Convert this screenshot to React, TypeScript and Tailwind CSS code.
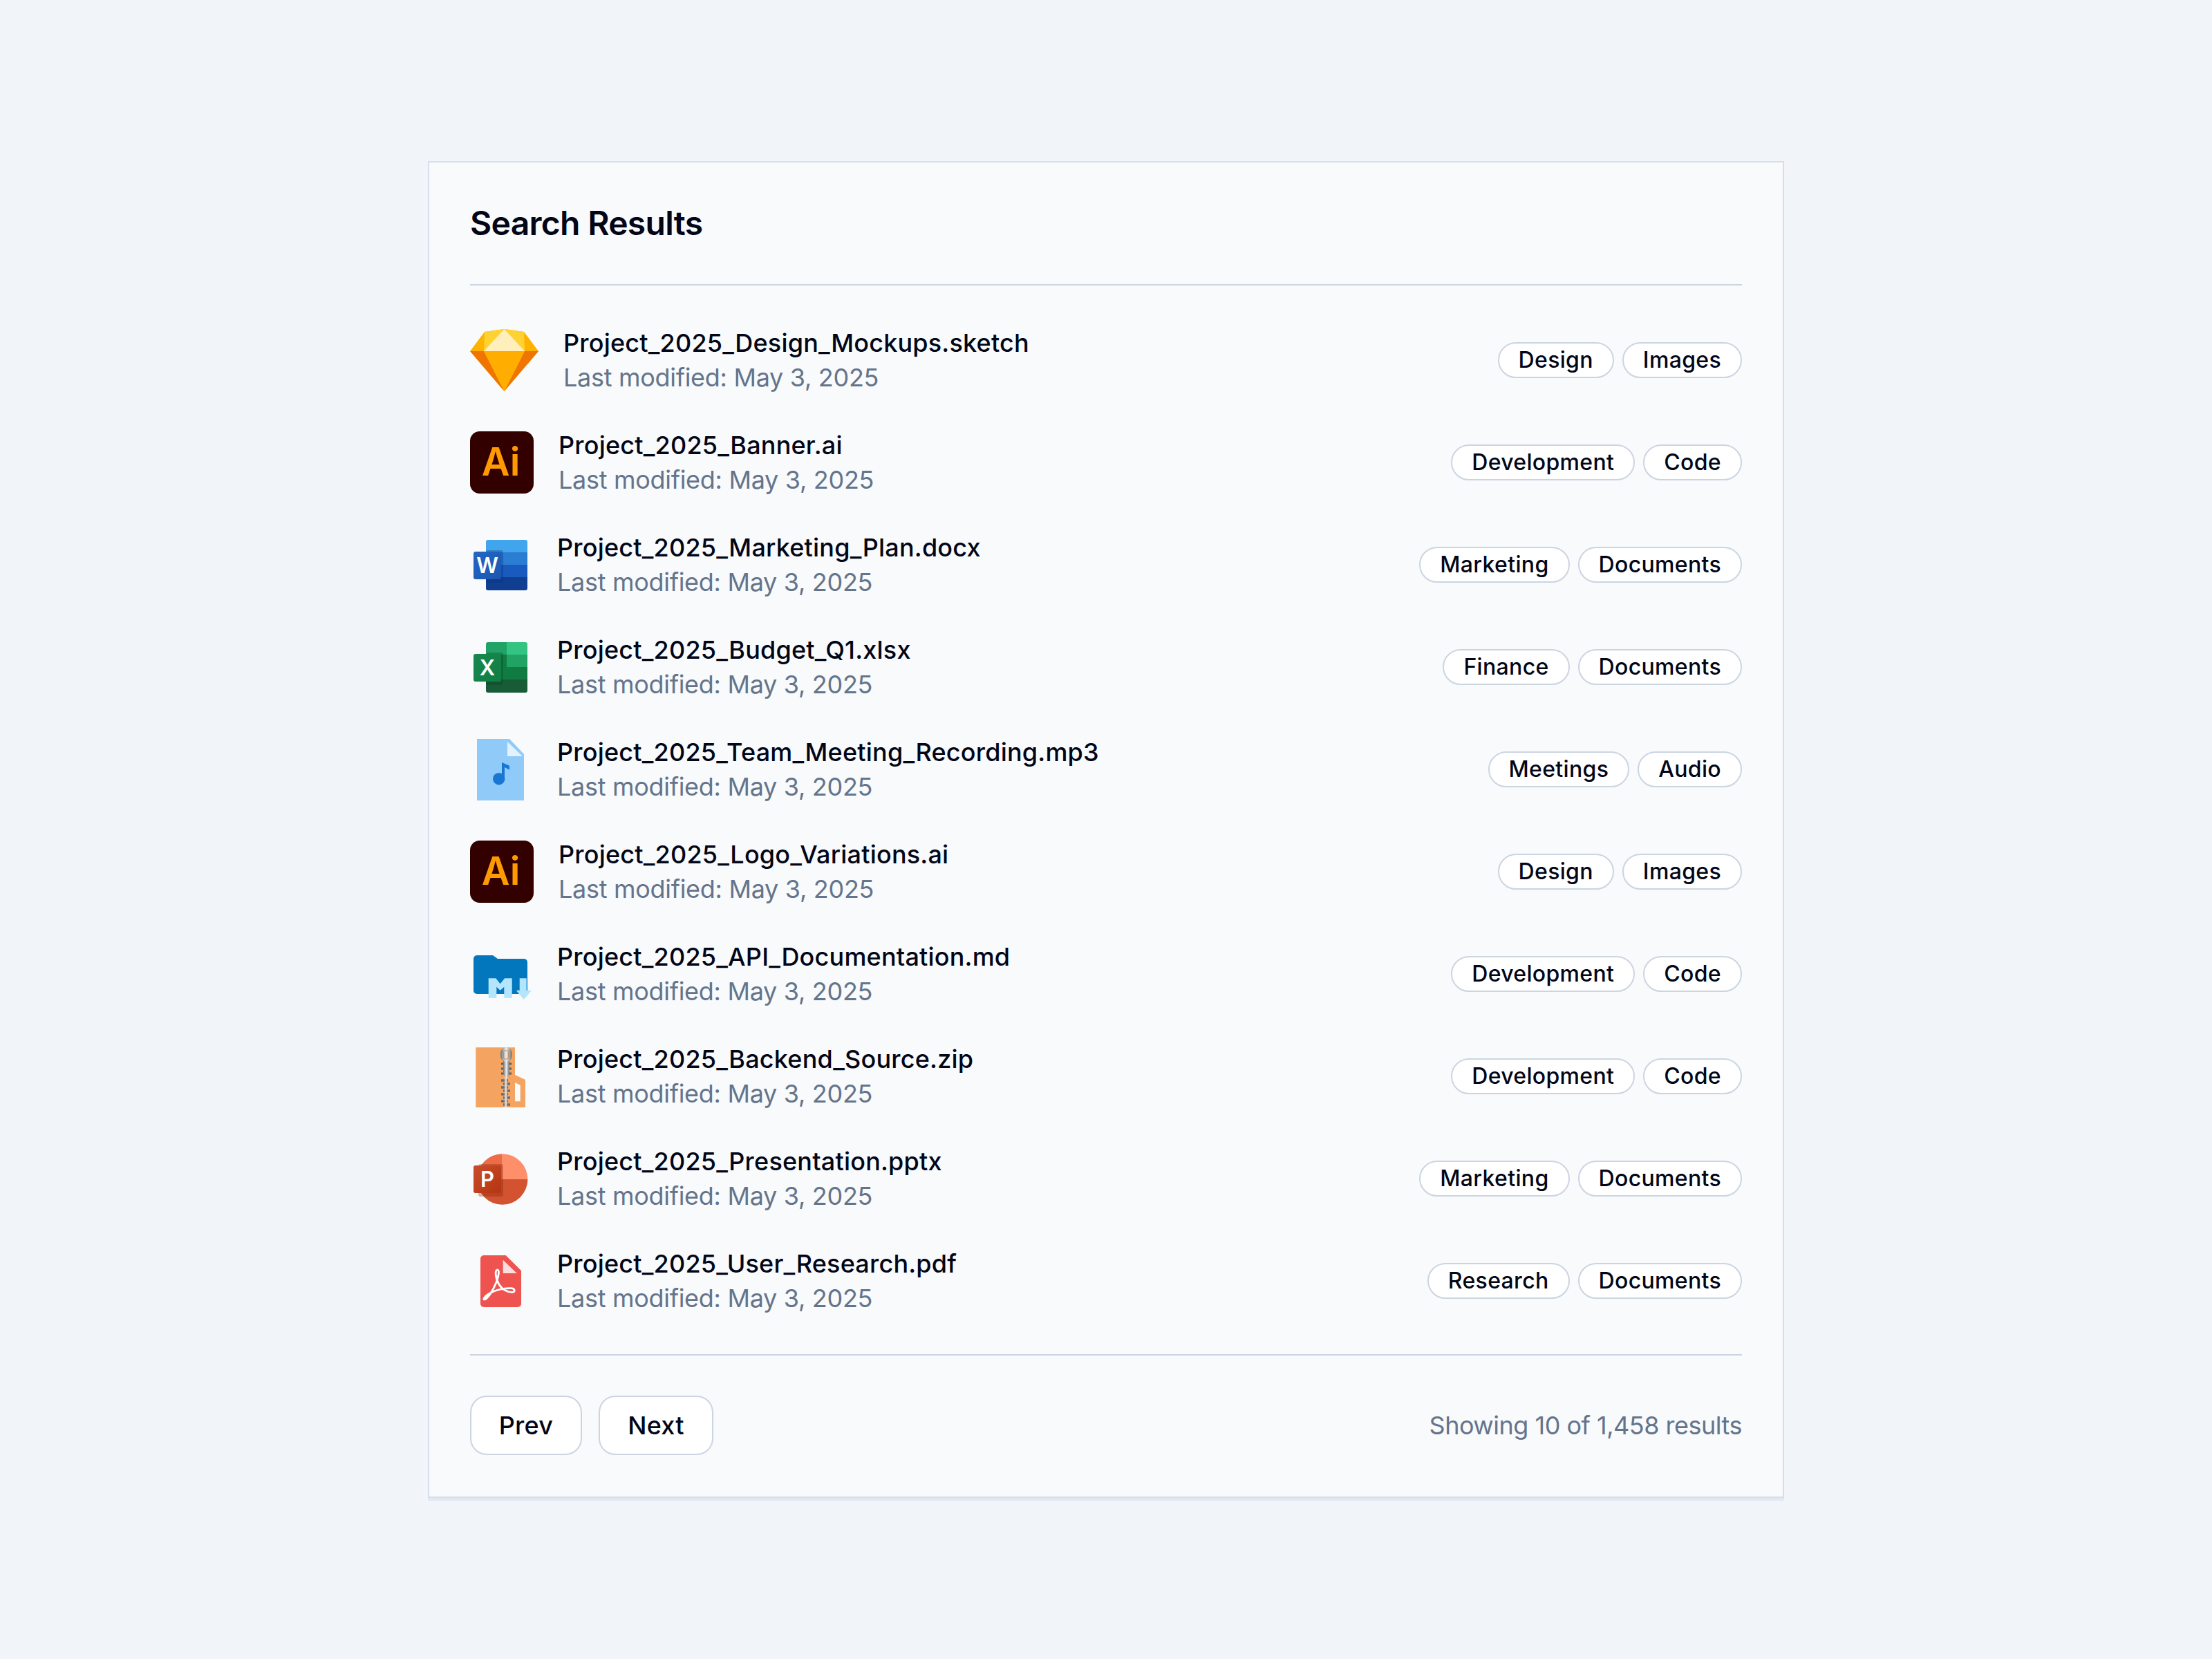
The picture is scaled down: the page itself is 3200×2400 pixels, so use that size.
type Tag = string;

interface FileRow {
  name: string;
  tags: [Tag, Tag];
  icon: React.ReactNode;
}

function SketchIcon() {
  return (
    <svg width="99" height="90" viewBox="0 0 99 90" className="shrink-0">
      <path d="M0 32 21 4 49.500 0 78 4 99 32 49.500 90Z" fill="#ffb300" />
      <path d="M21 4 49.500 0 78 4 79 32H20Z" fill="#ffd233" />
      <path d="M49.500 0 79 32H20Z" fill="#ffefbc" />
      <path d="M0 32H20L49.500 90Z" fill="#ef7400" />
      <path d="M99 32H79L49.500 90Z" fill="#ef7400" />
      <path d="M20 32H79L49.500 90Z" fill="#ffae00" />
    </svg>
  );
}

function AiIcon() {
  return (
    <div className="flex h-[90px] w-[92px] shrink-0 items-center justify-center rounded-[14px] bg-[#330000] pr-[3px] pb-[2px] text-[56px] leading-none font-semibold text-[#ff9a00]">
      Ai
    </div>
  );
}

function WordIcon() {
  return (
    <svg width="90" height="90" viewBox="0 0 90 90" className="shrink-0">
      <defs>
        <linearGradient id="wordSquare" x1="0" y1="0" x2="1" y2="1">
          <stop offset="0" stopColor="#2368c4" />
          <stop offset="1" stopColor="#1a56b0" />
        </linearGradient>
      </defs>
      <path d="M23 12a3 3 0 0 1 3-3h54a3 3 0 0 1 3 3v15H23Z" fill="#41a5ee" />
      <rect x="23" y="27" width="60" height="18" fill="#2b7cd3" />
      <rect x="23" y="45" width="60" height="18" fill="#185abd" />
      <path d="M23 63h60v16a3 3 0 0 1-3 3H26a3 3 0 0 1-3-3Z" fill="#103f91" />
      <rect x="23" y="24" width="25" height="47" rx="3" fill="#0b2f70" opacity="0.3" />
      <rect x="5" y="26" width="40" height="40" rx="3" fill="url(#wordSquare)" />
      <text x="25" y="57" textAnchor="middle" fontSize="31" fontWeight="600" fill="#fff" fontFamily="Inter, sans-serif">W</text>
    </svg>
  );
}

function ExcelIcon() {
  return (
    <svg width="90" height="90" viewBox="0 0 90 90" className="shrink-0">
      <defs>
        <linearGradient id="excelSquare" x1="0" y1="0" x2="1" y2="1">
          <stop offset="0" stopColor="#18884f" />
          <stop offset="1" stopColor="#117e43" />
        </linearGradient>
      </defs>
      <path d="M23 12a3 3 0 0 1 3-3h27v18H23Z" fill="#21a366" />
      <path d="M53 9h27a3 3 0 0 1 3 3v15H53Z" fill="#33c481" />
      <rect x="23" y="27" width="30" height="18" fill="#107c41" />
      <rect x="53" y="27" width="30" height="18" fill="#21a366" />
      <rect x="23" y="45" width="60" height="18" fill="#107c41" />
      <path d="M23 63h60v16a3 3 0 0 1-3 3H26a3 3 0 0 1-3-3Z" fill="#185c37" />
      <rect x="23" y="24" width="25" height="47" rx="3" fill="#0b3d20" opacity="0.3" />
      <rect x="5" y="26" width="40" height="40" rx="3" fill="url(#excelSquare)" />
      <text x="25" y="57" textAnchor="middle" fontSize="31" fontWeight="600" fill="#fff" fontFamily="Inter, sans-serif">X</text>
    </svg>
  );
}

function AudioIcon() {
  return (
    <svg width="90" height="90" viewBox="0 0 90 90" className="shrink-0">
      <path d="M10 1H57L78 23V90H10Z" fill="#90caf9" />
      <path d="M54 5 76 26H54Z" fill="#e3f2fd" />
      <circle cx="41.700" cy="58.700" r="8.700" fill="#1976d2" />
      <path d="M46 35 57 39.700V45.700L50 42V59H46Z" fill="#1976d2" />
    </svg>
  );
}

function MarkdownIcon() {
  return (
    <svg width="90" height="90" viewBox="0 0 90 90" className="shrink-0">
      <path d="M10 18H33L40 23H78a5 5 0 0 1 5 5V69a5 5 0 0 1-5 5H10a5 5 0 0 1-5-5V23a5 5 0 0 1 5-5Z" fill="#0277bd" />
      <path d="M26.700 51.300H37.300L43.700 59.300 50 51.300H60.700V79.700H49.300V63.700L43.700 68.700 38.300 63.700V79.700H26.700Z" fill="#b3e5fc" />
      <path d="M71.700 51.300H81.700V68.700H89L77.700 82 66.700 68.700H71.700Z" fill="#b3e5fc" />
    </svg>
  );
}

function ZipIcon() {
  return (
    <svg width="90" height="90" viewBox="0 0 90 90" className="shrink-0">
      <defs>
        <linearGradient id="zipMetal" x1="0" y1="0" x2="1" y2="0">
          <stop offset="0" stopColor="#6f6f6f" />
          <stop offset="0.5" stopColor="#ececec" />
          <stop offset="1" stopColor="#6f6f6f" />
        </linearGradient>
      </defs>
      <path d="M8.300 3.300H65V43L80 50V90H8.300Z" fill="#f4a460" />
      <path d="M65 54 72.700 58V81.300H65Z" fill="#f8fafc" />
      {/* side teeth along the open part */}
      <path d="M45 27h4M45 34h4M45 41h4M56 27h4M56 34h4M56 41h4" stroke="#5f5f5f" strokeWidth="3" />
      {/* closed teeth */}
      <path d="M45 51h10M48 56h10M45 61h10M48 66h10M45 71h10M48 76h10M45 81h10M48 86h10" stroke="#6e6e6e" strokeWidth="3.500" />
      <rect x="50" y="46" width="3.500" height="44" fill="#d4d4d4" />
      {/* slider and pull */}
      <path d="M48 20H57V42L53 49 48 42Z" fill="url(#zipMetal)" />
      <rect x="44" y="3" width="16.700" height="21" rx="8.300" fill="url(#zipMetal)" />
      <rect x="48.500" y="8" width="7" height="12" rx="1.500" fill="none" stroke="#c98c5a" strokeWidth="1" />
    </svg>
  );
}

function PowerPointIcon() {
  return (
    <svg width="90" height="90" viewBox="0 0 90 90" className="shrink-0">
      <defs>
        <linearGradient id="pptSquare" x1="0" y1="0" x2="1" y2="1">
          <stop offset="0" stopColor="#ca4c28" />
          <stop offset="1" stopColor="#b53512" />
        </linearGradient>
      </defs>
      <path d="M46.700 46H10a36.700 36.700 0 0 0 73.400 0Z" fill="#d35230" />
      <path d="M46.700 9.300a36.700 36.700 0 0 0-36.700 36.700H46.700Z" fill="#ed6c47" />
      <path d="M46.700 9.300V46H83.400A36.700 36.700 0 0 0 46.700 9.300Z" fill="#ff8f6b" />
      <rect x="12" y="24" width="36" height="47" rx="3" fill="#7e2a12" opacity="0.35" />
      <rect x="5" y="26" width="40" height="40" rx="3" fill="url(#pptSquare)" />
      <text x="25" y="57" textAnchor="middle" fontSize="31" fontWeight="600" fill="#fff" fontFamily="Inter, sans-serif">P</text>
    </svg>
  );
}

function PdfIcon() {
  return (
    <svg width="90" height="90" viewBox="0 0 90 90" className="shrink-0">
      <path d="M20 8H51.700L74 30.300V78a5 5 0 0 1-5 5H20a5 5 0 0 1-5-5V13a5 5 0 0 1 5-5Z" fill="#ef5350" />
      <path d="M47.700 14.700V34H67.700Z" fill="#f8dede" />
      <path
        d="M20.700 72C25 71.300 33.300 59.700 38.300 46.300 41.700 36.300 42.700 29.700 39.700 29 36 28.700 36 39.700 41.700 49.700 46.700 58 55 62 61.700 61.300 65.700 60.700 65 56.300 60 55.700 50 54.700 35 58.700 26.700 64 20.700 68 18.300 72 20.700 72Z"
        fill="none"
        stroke="#fff"
        strokeWidth="2.800"
      />
    </svg>
  );
}

const files: FileRow[] = [
  { name: "Project_2025_Design_Mockups.sketch", tags: ["Design", "Images"], icon: <SketchIcon /> },
  { name: "Project_2025_Banner.ai", tags: ["Development", "Code"], icon: <AiIcon /> },
  { name: "Project_2025_Marketing_Plan.docx", tags: ["Marketing", "Documents"], icon: <WordIcon /> },
  { name: "Project_2025_Budget_Q1.xlsx", tags: ["Finance", "Documents"], icon: <ExcelIcon /> },
  { name: "Project_2025_Team_Meeting_Recording.mp3", tags: ["Meetings", "Audio"], icon: <AudioIcon /> },
  { name: "Project_2025_Logo_Variations.ai", tags: ["Design", "Images"], icon: <AiIcon /> },
  { name: "Project_2025_API_Documentation.md", tags: ["Development", "Code"], icon: <MarkdownIcon /> },
  { name: "Project_2025_Backend_Source.zip", tags: ["Development", "Code"], icon: <ZipIcon /> },
  { name: "Project_2025_Presentation.pptx", tags: ["Marketing", "Documents"], icon: <PowerPointIcon /> },
  { name: "Project_2025_User_Research.pdf", tags: ["Research", "Documents"], icon: <PdfIcon /> },
];

export default function App() {
  return (
    <div className="flex h-[2400px] w-[3200px] items-center justify-center bg-[#f1f5f9] font-['Inter',sans-serif] text-[#020617]">
      <div className="w-[1962px] border-2 border-[#d5deea] bg-[#f8fafc] px-[59px] pt-[58px] pb-[60px] shadow-[0_4px_0_#e2e8f0]">

        {/* Header */}

        <div className="border-b-2 border-[#cbd5e1] pb-[58px]">
          <h1 className="text-[48px] leading-[60px] font-semibold tracking-[-0.7px]">
            Search Results
          </h1>
        </div>

        {/* Rows */}

        <div className="pt-[34px] pb-[32px]">
          {files.map((file) => (
            <div key={file.name} className="flex h-[148px] items-center justify-between">
              <div className="flex items-center gap-[36px]">
                {file.icon}
                <div>
                  <div className="text-[36px] leading-[50px] font-medium tracking-[0.2px]">
                    {file.name}
                  </div>
                  <div className="text-[36px] leading-[50px] tracking-[-0.3px] text-[#64748b]">
                    Last modified: May 3, 2025
                  </div>
                </div>
              </div>
              <div className="flex gap-[12px]">
                {file.tags.map((tag) => (
                  <span
                    key={tag}
                    className="rounded-full border-2 border-[#cbd5e1] bg-white px-[28px] text-[32px] leading-[48px] font-[450] tracking-[0.33px]"
                  >
                    {tag}
                  </span>
                ))}
              </div>
            </div>
          ))}
        </div>

        {/* Footer */}

        <div className="flex items-center justify-between border-t-2 border-[#cbd5e1] pt-[58px]">
          <div className="flex gap-[24px]">
            <button className="h-[86px] w-[162px] rounded-[24px] border-2 border-[#cbd5e1] bg-white text-[36px] font-[450] tracking-[0.3px]">
              Prev
            </button>
            <button className="h-[86px] w-[166px] rounded-[24px] border-2 border-[#cbd5e1] bg-white text-[36px] font-[450] tracking-[0.3px]">
              Next
            </button>
          </div>
          <div className="text-[36px] tracking-[-0.5px] text-[#64748b]">
            Showing 10 of 1,458 results
          </div>
        </div>

      </div>
    </div>
  );
}
